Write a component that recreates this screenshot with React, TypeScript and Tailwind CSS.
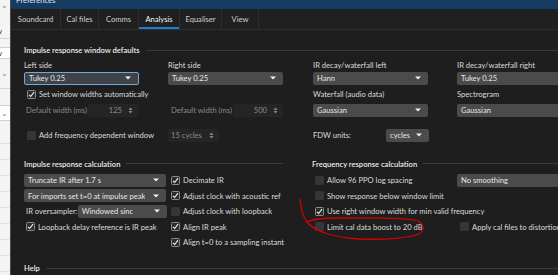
import clsx from 'clsx';
import type {ReactNode} from 'react';

const tabs = [
	{label: 'Soundcard', w: 'w-[50px]'},
	{label: 'Cal files', w: 'w-[38px]'},
	{label: 'Comms', w: 'w-[40px]'},
	{label: 'Analysis', w: 'w-[41px]', active: true},
	{label: 'Equaliser', w: 'w-[42px]'},
	{label: 'View', w: 'w-[37px]'},
];

function Caret() {
	return (
		<svg width="6" height="4" viewBox="0 0 6 4" className="shrink-0">
			<path d="M0 0.5h6L3 3.5z" fill="#f0f0f0" />
		</svg>
	);
}

function SpinArrows() {
	return (
		<svg width="5" height="7" viewBox="0 0 5 7" className="shrink-0">
			<path d="M0.5 3L2.5 0.5L4.5 3z M0.5 4L2.5 6.5L4.5 4z" fill="#8a8a8a" />
		</svg>
	);
}

function Select({label, className, focused}: {label: string; className?: string; focused?: boolean}) {
	return (
		<div
			className={clsx(
				'flex h-[13px] shrink-0 items-center justify-between rounded-[2px] pl-[4px] pr-[7px] text-[#e6e6e6]',
				focused ? 'border border-[#6ea8dc] bg-[#3f4348]' : 'bg-[#4b4b4b]',
				className,
			)}
		>
			<span className="truncate">{label}</span>
			<Caret />
		</div>
	);
}

function Spin({value, className, left}: {value: string; className?: string; left?: boolean}) {
	return (
		<div
			className={clsx(
				'flex h-[13px] shrink-0 items-center rounded-[2px] bg-[#252525] pr-[5px] text-[#8a8a8a]',
				left ? 'justify-between pl-[3px]' : 'justify-end gap-[6px]',
				className,
			)}
		>
			<span>{value}</span>
			<SpinArrows />
		</div>
	);
}

function Check({checked, label, className}: {checked?: boolean; label: string; className?: string}) {
	return (
		<div className={clsx('flex items-center gap-[3px] whitespace-nowrap', className)}>
			{checked ? (
				<span className="flex h-[9px] w-[9px] shrink-0 items-center justify-center rounded-[1.5px] border border-[#8c8c8c] bg-[#2c2c2c]">
					<svg width="7" height="7" viewBox="0 0 7 7">
						<path d="M1 3.8L2.7 5.5L6 1.2" fill="none" stroke="#f2f2f2" strokeWidth="1.1" />
					</svg>
				</span>
			) : (
				<span className="h-[9px] w-[9px] shrink-0 rounded-[1.5px] bg-[#363636]" />
			)}
			<span>{label}</span>
		</div>
	);
}

function GroupTitle({children}: {children: ReactNode}) {
	return (
		<div className="flex h-[12px] items-center gap-[6px]">
			<span className="whitespace-nowrap font-semibold text-[#ececec]">{children}</span>
			<div className="h-px flex-1 bg-[#3a3a3a]" />
		</div>
	);
}

function LeftStrip() {
	return (
		<div className="relative w-[11px] shrink-0 overflow-hidden border-r border-[#4a4a4a] bg-[#f4f4f4] text-[#333]">
			<div className="flex h-[10px] items-center justify-end pr-[2px] text-[#888]">⌄</div>
			<div className="mt-[14px] h-[14px] leading-[14px] -ml-[4px]">w</div>
			<div className="h-px bg-[#d6d6d6]" />
			<div className="mt-[8px] h-[12px] border-y border-[#cfcfcf] bg-white leading-[10px] -ml-[4px]">w</div>
			<div className="mt-[9px] flex h-[10px] items-center justify-end pr-[2px] text-[#888]">⌄</div>
			<div className="mt-[10px] h-px bg-[#d6d6d6]" />
			<div className="mt-[16px] flex h-[16px] items-center justify-end border-y border-[#cfcfcf] bg-white pr-[2px] text-[#888]">⌄</div>
			<div className="mt-[22px] h-px bg-[#dedede]" />
			{[0, 1, 2, 3, 4, 5, 6, 7].map(i => (
				<div key={i} className="h-[16px] border-b border-[#e2e2e2]" />
			))}
		</div>
	);
}

export default function App() {
	return (
		<div className="relative flex h-[275px] w-[558px] overflow-hidden bg-[#1e1e1e] font-['Lato','Open_Sans',sans-serif] text-[7.6px] leading-[10px] text-[#dcdcdc]">
			<LeftStrip />

			<div className="flex min-w-0 flex-1 flex-col">
				<div className="h-[9px] shrink-0 overflow-hidden bg-[#163b62] pl-[5px]">
					<div className="-mt-[5px] leading-[10px] text-[#e2e8ef]">Preferences</div>
				</div>

				<div className="flex h-[21px] shrink-0 border-b border-[#2e2e2e] bg-[#202020]">
					{tabs.map(t => (
						<div
							key={t.label}
							className={clsx(
								'relative flex items-center justify-center border-r border-[#2f2f2f]',
								t.w,
								t.active ? 'text-[#f4f4f4]' : 'text-[#cfcfcf]',
							)}
						>
							{t.label}
							{t.active && <div className="absolute bottom-0 left-0 right-0 h-[2px] bg-[#1e7fd8]" />}
						</div>
					))}
				</div>

				<div className="min-h-0 flex-1 pl-[13px] pt-[14px]">
					<GroupTitle>Impulse response window defaults</GroupTitle>

					<div className="mt-[4px] grid h-[10px] grid-cols-[144px_145px_144px_1fr]">
						<div>Left side</div>
						<div>Right side</div>
						<div>IR decay/waterfall left</div>
						<div>IR decay/waterfall right</div>
					</div>
					<div className="mt-[1.5px] grid grid-cols-[144px_145px_144px_1fr]">
						<Select label="Tukey 0.25" focused className="w-[115px]" />
						<Select label="Tukey 0.25" className="w-[115px]" />
						<Select label="Hann" className="w-[115px]" />
						<Select label="Tukey 0.25" className="w-[115px]" />
					</div>
					<div className="mt-[4.5px] grid h-[10px] grid-cols-[144px_145px_144px_1fr] items-center">
						<Check checked label="Set window widths automatically" className="pl-[3px]" />
						<div />
						<div>Waterfall (audio data)</div>
						<div>Spectrogram</div>
					</div>
					<div className="mt-[4.5px] grid grid-cols-[144px_145px_144px_1fr] items-center">
						<div className="flex w-[114px] items-center justify-between pl-[2px]">
							<span className="whitespace-nowrap text-[#8a8a8a]">Default width (ms)</span>
							<Spin value="125" className="w-[50px]" />
						</div>
						<div className="flex w-[115px] items-center justify-between pl-[3px]">
							<span className="whitespace-nowrap text-[#8a8a8a]">Default width (ms)</span>
							<Spin value="500" className="w-[50px]" />
						</div>
						<Select label="Gaussian" className="w-[115px]" />
						<Select label="Gaussian" className="w-[115px]" />
					</div>
					<div className="mt-[12px] grid grid-cols-[144px_145px_144px_1fr] items-center">
						<Check label="Add frequency dependent window" className="pl-[3px]" />
						<Spin value="15 cycles" left className="w-[51px]" />
						<div className="flex w-[116px] items-center justify-between">
							<span className="whitespace-nowrap">FDW units:</span>
							<Select label="cycles" className="w-[43px]" />
						</div>
						<div />
					</div>

					<div className="mt-[16px] flex">
						<div className="w-[259px] shrink-0">
							<GroupTitle>Impulse response calculation</GroupTitle>
							<div className="mt-[3px] grid grid-cols-[142px_1fr] gap-x-[5px]">
								<div className="flex h-[15.5px] items-center">
									<Select label="Truncate IR after 1.7 s" className="w-full" />
								</div>
								<div className="flex h-[15.5px] items-center">
									<Check checked label="Decimate IR" />
								</div>
								<div className="flex h-[15.5px] items-center">
									<Select label="For imports set t=0 at impulse peak" className="w-full" />
								</div>
								<div className="flex h-[15.5px] items-center">
									<Check checked label="Adjust clock with acoustic ref" />
								</div>
								<div className="flex h-[15.5px] items-center justify-between pl-[2px]">
									<span className="whitespace-nowrap">IR oversampler:</span>
									<Select label="Windowed sinc" className="w-[89px]" />
								</div>
								<div className="flex h-[15.5px] items-center">
									<Check label="Adjust clock with loopback" />
								</div>
								<div className="flex h-[15.5px] items-center pl-[2px]">
									<Check checked label="Loopback delay reference is IR peak" />
								</div>
								<div className="flex h-[15.5px] items-center">
									<Check checked label="Align IR peak" />
								</div>
								<div className="h-[15.5px]" />
								<div className="flex h-[15.5px] items-center">
									<Check checked label="Align t=0 to a sampling instant" />
								</div>
							</div>
						</div>

						<div className="ml-[29px] min-w-0 flex-1">
							<GroupTitle>Frequency response calculation</GroupTitle>
							<div className="mt-[3px] grid grid-cols-[145px_1fr]">
								<div className="flex h-[15.5px] items-center pl-[3px]">
									<Check label="Allow 96 PPO log spacing" />
								</div>
								<div className="flex h-[15.5px] items-center">
									<Select label="No smoothing" className="w-[115px]" />
								</div>
								<div className="col-span-2 flex h-[15.5px] items-center pl-[3px]">
									<Check label="Show response below window limit" />
								</div>
								<div className="col-span-2 flex h-[15.5px] items-center pl-[3px]">
									<Check checked label="Use right window width for min valid frequency" />
								</div>
								<div className="flex h-[15.5px] items-center pl-[3px]">
									<Check label="Limit cal data boost to 20 dB" />
								</div>
								<div className="flex h-[15.5px] items-center pl-[3px]">
									<Check label="Apply cal files to distortion" />
								</div>
							</div>
						</div>
					</div>

					<div className="mt-[12px]">
						<GroupTitle>Help</GroupTitle>
					</div>
				</div>
			</div>

			<svg className="pointer-events-none absolute left-0 top-0" width="558" height="275" viewBox="0 0 558 275">
				<path
					d="M300 199C301 210 303 217 307 222C314 231 335 238 360 239C385 240 410 238 419 234C425 230 424 224 418 221C405 217 370 218 340 218C325 218 313 219 307 222"
					fill="none"
					stroke="#d40000"
					strokeWidth="1.3"
					strokeLinecap="round"
				/>
			</svg>
		</div>
	);
}
